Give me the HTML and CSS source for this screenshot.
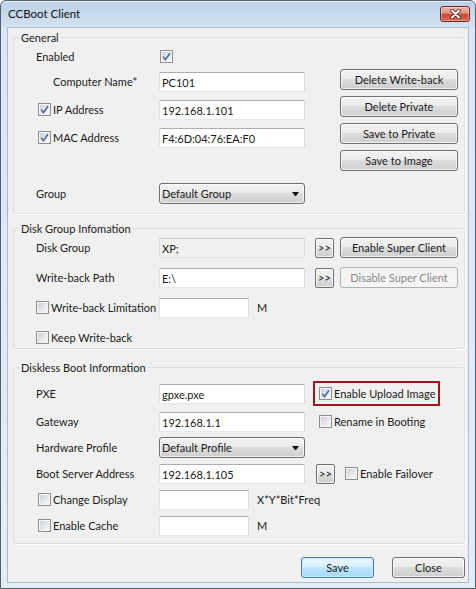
FILE: index.html
```html
<!DOCTYPE html>
<html lang="en">
<head>
<meta charset="utf-8">
<title>CCBoot Client</title>
<link rel="stylesheet" href="styles.css">
</head>
<body>
<div class="window">
  <div class="titlebar">
    <span class="title">CCBoot Client</span>
    <button class="close" aria-label="Close">
      <svg width="11" height="10" viewBox="0 0 11 10"><path d="M2 1.5 L9 8.5 M9 1.5 L2 8.5" stroke="#5a1a12" stroke-width="3.6" stroke-linecap="round"/><path d="M2 1.5 L9 8.5 M9 1.5 L2 8.5" stroke="#fff" stroke-width="2" stroke-linecap="round"/></svg>
    </button>
  </div>
  <div class="client">
    <fieldset class="group general">
      <legend>General</legend>
      <div class="general-body">
        <div class="form">
          <div class="row">
            <span class="lbl">Enabled</span>
            <span class="cb checked field-cb"><svg width="9" height="9" viewBox="0 0 9 9"><path d="M1.2 4.6 L3.4 7.6 L8 1.2" fill="none" stroke="#52679a" stroke-width="1.6"/></svg></span>
          </div>
          <div class="row mt4">
            <span class="lbl indent">Computer Name*</span>
            <input class="edit" type="text" value="PC101">
          </div>
          <div class="row mt7">
            <span class="lbl"><span class="cb checked"><svg width="9" height="9" viewBox="0 0 9 9"><path d="M1.2 4.6 L3.4 7.6 L8 1.2" fill="none" stroke="#52679a" stroke-width="1.6"/></svg></span>IP Address</span>
            <input class="edit" type="text" value="192.168.1.101">
          </div>
          <div class="row mt7">
            <span class="lbl"><span class="cb checked"><svg width="9" height="9" viewBox="0 0 9 9"><path d="M1.2 4.6 L3.4 7.6 L8 1.2" fill="none" stroke="#52679a" stroke-width="1.6"/></svg></span>MAC Address</span>
            <input class="edit" type="text" value="F4:6D:04:76:EA:F0">
          </div>
          <div class="row mt35">
            <span class="lbl">Group</span>
            <div class="select">Default Group</div>
          </div>
        </div>
        <div class="actions">
          <button class="btn wide">Delete Write-back</button>
          <button class="btn wide">Delete Private</button>
          <button class="btn wide">Save to Private</button>
          <button class="btn wide">Save to Image</button>
        </div>
      </div>
    </fieldset>

    <fieldset class="group disk">
      <legend>Disk Group Infomation</legend>
      <div class="form rows-disk">
        <div class="row">
          <span class="lbl">Disk Group</span>
          <input class="edit readonly" type="text" value="XP;" readonly>
          <button class="btn more">&gt;&gt;</button>
          <button class="btn wide side">Enable Super Client</button>
        </div>
        <div class="row">
          <span class="lbl">Write-back Path</span>
          <input class="edit" type="text" value="E:\">
          <button class="btn more">&gt;&gt;</button>
          <button class="btn wide side disabled">Disable Super Client</button>
        </div>
        <div class="row">
          <span class="lbl flush"><span class="cb"></span>Write-back Limitation</span>
          <input class="edit short" type="text" value="">
          <span class="unit">M</span>
        </div>
        <div class="row">
          <span class="lbl flush"><span class="cb"></span>Keep Write-back</span>
        </div>
      </div>
    </fieldset>

    <fieldset class="group diskless">
      <legend>Diskless Boot Information</legend>
      <div class="form rows-diskless">
        <div class="row">
          <span class="lbl">PXE</span>
          <input class="edit" type="text" value="gpxe.pxe">
          <span class="upload"><span class="cb checked"><svg width="9" height="9" viewBox="0 0 9 9"><path d="M1.2 4.6 L3.4 7.6 L8 1.2" fill="none" stroke="#52679a" stroke-width="1.6"/></svg></span>Enable Upload Image</span>
        </div>
        <div class="row mt2">
          <span class="lbl">Gateway</span>
          <input class="edit" type="text" value="192.168.1.1">
          <span class="opt rename"><span class="cb"></span>Rename in Booting</span>
        </div>
        <div class="row">
          <span class="lbl">Hardware Profile</span>
          <div class="select">Default Profile</div>
        </div>
        <div class="row">
          <span class="lbl">Boot Server Address</span>
          <input class="edit" type="text" value="192.168.1.105">
          <button class="btn more bs">&gt;&gt;</button>
          <span class="opt failover"><span class="cb"></span>Enable Failover</span>
        </div>
        <div class="row">
          <span class="lbl"><span class="cb"></span>Change Display</span>
          <input class="edit short" type="text" value="">
          <span class="unit">X*Y*Bit*Freq</span>
        </div>
        <div class="row">
          <span class="lbl"><span class="cb"></span>Enable Cache</span>
          <input class="edit short" type="text" value="">
          <span class="unit">M</span>
        </div>
      </div>
    </fieldset>

    <div class="footer">
      <button class="btn foot default">Save</button>
      <button class="btn foot">Close</button>
    </div>
  </div>
</div>
</body>
</html>
```

FILE: styles.css
```css
* { box-sizing: border-box; }

html, body {
  margin: 0;
  padding: 0;
}

body {
  width: 476px;
  height: 589px;
  overflow: hidden;
  background: #ffffff;
  font-family: Lato, "Liberation Sans", sans-serif;
  font-size: 11px;
  color: #1b1b1b;
}

.window {
  width: 476px;
  height: 589px;
  border: 1px solid #55606e;
  border-radius: 6px 6px 0 0;
  padding: 0 6px 5px;
  display: flex;
  flex-direction: column;
  background: linear-gradient(to bottom, #bcd1e9 0, #d2e0f0 25px, #dbe6f3 27px, #e4edf7 100%);
  box-shadow: inset 0 1px 0 #e6eef8;
}

.titlebar {
  height: 26px;
  margin: 0 -6px;
  padding: 0 5px 0 7px;
  display: flex;
  align-items: flex-start;
  justify-content: space-between;
  flex: none;
}

.title {
  line-height: 26px;
  font-size: 11.5px;
  color: #111;
}

.close {
  margin-top: 5px;
  width: 30px;
  height: 16px;
  padding: 0;
  border: 1px solid #6e2a22;
  border-radius: 3px;
  background: linear-gradient(to bottom, #ecb7ac 0%, #de8f7f 45%, #c84a32 52%, #d66a50 100%);
  box-shadow: inset 0 0 0 1px rgba(255, 255, 255, 0.35);
  display: flex;
  align-items: center;
  justify-content: center;
}

.client {
  flex: 1;
  background: #f0f0f0;
  border: 1px solid #a9bcd1;
  padding: 2px 3px 4px 5px;
  display: flex;
  flex-direction: column;
}

.group {
  margin: 0;
  min-width: 0;
  border: 1px solid #d5dfe5;
  border-radius: 3px;
  box-shadow: 1px 1px 0 #ffffff;
}

.group legend {
  padding: 0 2px;
  line-height: 15px;
}

.general { padding: 1px 6px 9px 5px; }
.disk { margin-top: 7px; padding: 1px 6px 0 5px; }
.diskless { margin-top: 11px; padding: 8px 6px 7px 5px; }

.general-body {
  display: flex;
}

.form {
  padding-left: 17px;
  display: flex;
  flex-direction: column;
}

.rows-disk { gap: 9px; }
.rows-diskless { gap: 5px; }

.row {
  display: flex;
  align-items: center;
  height: 21px;
  white-space: nowrap;
}

.mt2 { margin-top: 2px; }
.mt4 { margin-top: 4px; }
.mt7 { margin-top: 7px; }
.mt35 { margin-top: 35px; }

.lbl {
  width: 123px;
  flex: none;
  display: flex;
  align-items: center;
}

.lbl .cb { margin: 0 2px 0 2px; }
.lbl.flush .cb { margin: 0 2px 0 0; }

.indent { padding-left: 17px; }

.actions {
  margin-left: 35px;
  padding-top: 23px;
  display: flex;
  flex-direction: column;
  gap: 6px;
}

.edit {
  width: 146px;
  height: 20px;
  margin: 0;
  padding: 0 0 0 2px;
  align-self: flex-end;
  border: 1px solid;
  border-color: #abadb3 #dbdfe6 #e3e9ef #e2e3ea;
  background: #ffffff;
  font-family: inherit;
  font-size: 11px;
  color: #1b1b1b;
  outline: none;
}

.edit.short { width: 90px; }

.edit.readonly {
  background: #f0f0f0;
  border-color: #c9ccd1 #dde0e4 #e3e6ea #dde0e4;
}

.btn {
  height: 21px;
  margin: 0;
  padding: 0;
  border: 1px solid #707070;
  border-radius: 3px;
  background: linear-gradient(to bottom, #f2f2f2 0%, #ebebeb 49%, #dddddd 50%, #cfcfcf 100%);
  box-shadow: inset 0 0 0 1px rgba(255, 255, 255, 0.7);
  font-family: inherit;
  font-size: 11px;
  color: #1b1b1b;
  flex: none;
}

.btn.wide { width: 118px; }
.btn.side { margin-left: 6px; }

.btn.disabled {
  border-color: #adb2b5;
  background: #f4f4f4;
  box-shadow: none;
  color: #8b8b8b;
}

.btn.more {
  width: 19px;
  height: 20px;
  margin-left: 10px;
  border-radius: 2px;
  font-size: 11px;
  letter-spacing: 0;
  line-height: 1;
}

.btn.more.bs { margin-left: 11px; }

.select {
  width: 146px;
  height: 21px;
  flex: none;
  border: 1px solid #707070;
  border-radius: 3px;
  background: linear-gradient(to bottom, #f2f2f2 0%, #ebebeb 49%, #dddddd 50%, #cfcfcf 100%);
  box-shadow: inset 0 0 0 1px rgba(255, 255, 255, 0.7);
  padding: 0 5px 0 2px;
  display: flex;
  align-items: center;
  justify-content: space-between;
}

.select::after {
  content: "";
  width: 1px;
  height: 0;
  border-left: 3px solid transparent;
  border-right: 3px solid transparent;
  border-top: 4px solid #111;
}

.cb {
  width: 13px;
  height: 13px;
  flex: none;
  border: 1px solid #8e8f8f;
  background: linear-gradient(135deg, #c9cdd3 0%, #e4e6e9 50%, #fbfbfb 100%);
  box-shadow: inset 0 0 0 1px #f4f4f4;
  display: inline-flex;
  align-items: center;
  justify-content: center;
}

.field-cb { margin-left: 1px; }

.unit { margin-left: 8px; }

.upload {
  margin-left: 8px;
  width: 127px;
  height: 25px;
  flex: none;
  border: 2px solid #a0141e;
  padding-left: 4px;
  display: flex;
  align-items: center;
  gap: 2px;
}

.opt {
  display: flex;
  align-items: center;
  gap: 2px;
}

.opt.rename { margin-left: 14px; }
.opt.failover { margin-left: 10px; }

.footer {
  margin-top: 13px;
  display: flex;
  justify-content: flex-end;
  gap: 18px;
}

.btn.foot { width: 73px; }

.btn.default {
  border-color: #3c7fb1;
  background: linear-gradient(to bottom, #eaf6fd 0%, #d9f0fc 49%, #bee6fd 50%, #a7d9f5 100%);
  box-shadow: inset 0 0 0 1px #c6e9fb;
}
```
